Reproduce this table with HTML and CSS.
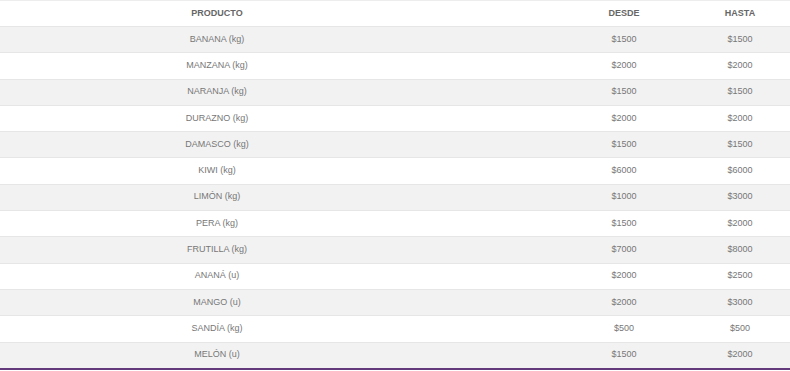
FILE: index.html
```html
<!DOCTYPE html>
<html lang="es">
<head>
<meta charset="utf-8">
<title>Precios</title>
<link rel="stylesheet" href="styles.css">
</head>
<body>
<div class="table">
  <div class="row head"><div class="c prod">PRODUCTO</div><div class="c">DESDE</div><div class="c">HASTA</div></div>
  <div class="row odd"><div class="c prod">BANANA (kg)</div><div class="c">$1500</div><div class="c">$1500</div></div>
  <div class="row"><div class="c prod">MANZANA (kg)</div><div class="c">$2000</div><div class="c">$2000</div></div>
  <div class="row odd"><div class="c prod">NARANJA (kg)</div><div class="c">$1500</div><div class="c">$1500</div></div>
  <div class="row"><div class="c prod">DURAZNO (kg)</div><div class="c">$2000</div><div class="c">$2000</div></div>
  <div class="row odd"><div class="c prod">DAMASCO (kg)</div><div class="c">$1500</div><div class="c">$1500</div></div>
  <div class="row"><div class="c prod">KIWI (kg)</div><div class="c">$6000</div><div class="c">$6000</div></div>
  <div class="row odd"><div class="c prod">LIMÓN (kg)</div><div class="c">$1000</div><div class="c">$3000</div></div>
  <div class="row"><div class="c prod">PERA (kg)</div><div class="c">$1500</div><div class="c">$2000</div></div>
  <div class="row odd"><div class="c prod">FRUTILLA (kg)</div><div class="c">$7000</div><div class="c">$8000</div></div>
  <div class="row"><div class="c prod">ANANÁ (u)</div><div class="c">$2000</div><div class="c">$2500</div></div>
  <div class="row odd"><div class="c prod">MANGO (u)</div><div class="c">$2000</div><div class="c">$3000</div></div>
  <div class="row"><div class="c prod">SANDÍA (kg)</div><div class="c">$500</div><div class="c">$500</div></div>
  <div class="row odd last"><div class="c prod">MELÓN (u)</div><div class="c">$1500</div><div class="c">$2000</div></div>
</div>
</body>
</html>
```
FILE: styles.css
```css
html, body {
  margin: 0;
  padding: 0;
  background: #fff;
}
body {
  font-family: "Liberation Sans", Arial, sans-serif;
  font-size: 9px;
  color: #777;
}
.table {
  width: 790px;
  border-bottom: 2px solid #643a7c;
}
.row {
  display: grid;
  grid-template-columns: 558px 132px 100px;
  height: 26.3px;
  box-sizing: border-box;
  border-top: 1px solid #e6e6e6;
  align-items: center;
}
.row.head {
  height: 26px;
  font-weight: bold;
  color: #666;
  border-top: 1px solid #ededed;
}
.row.odd {
  background: #f2f2f2;
}
.c {
  text-align: center;
  padding-bottom: 2px;
}
.c.prod {
  padding-right: 124px;
}
```
